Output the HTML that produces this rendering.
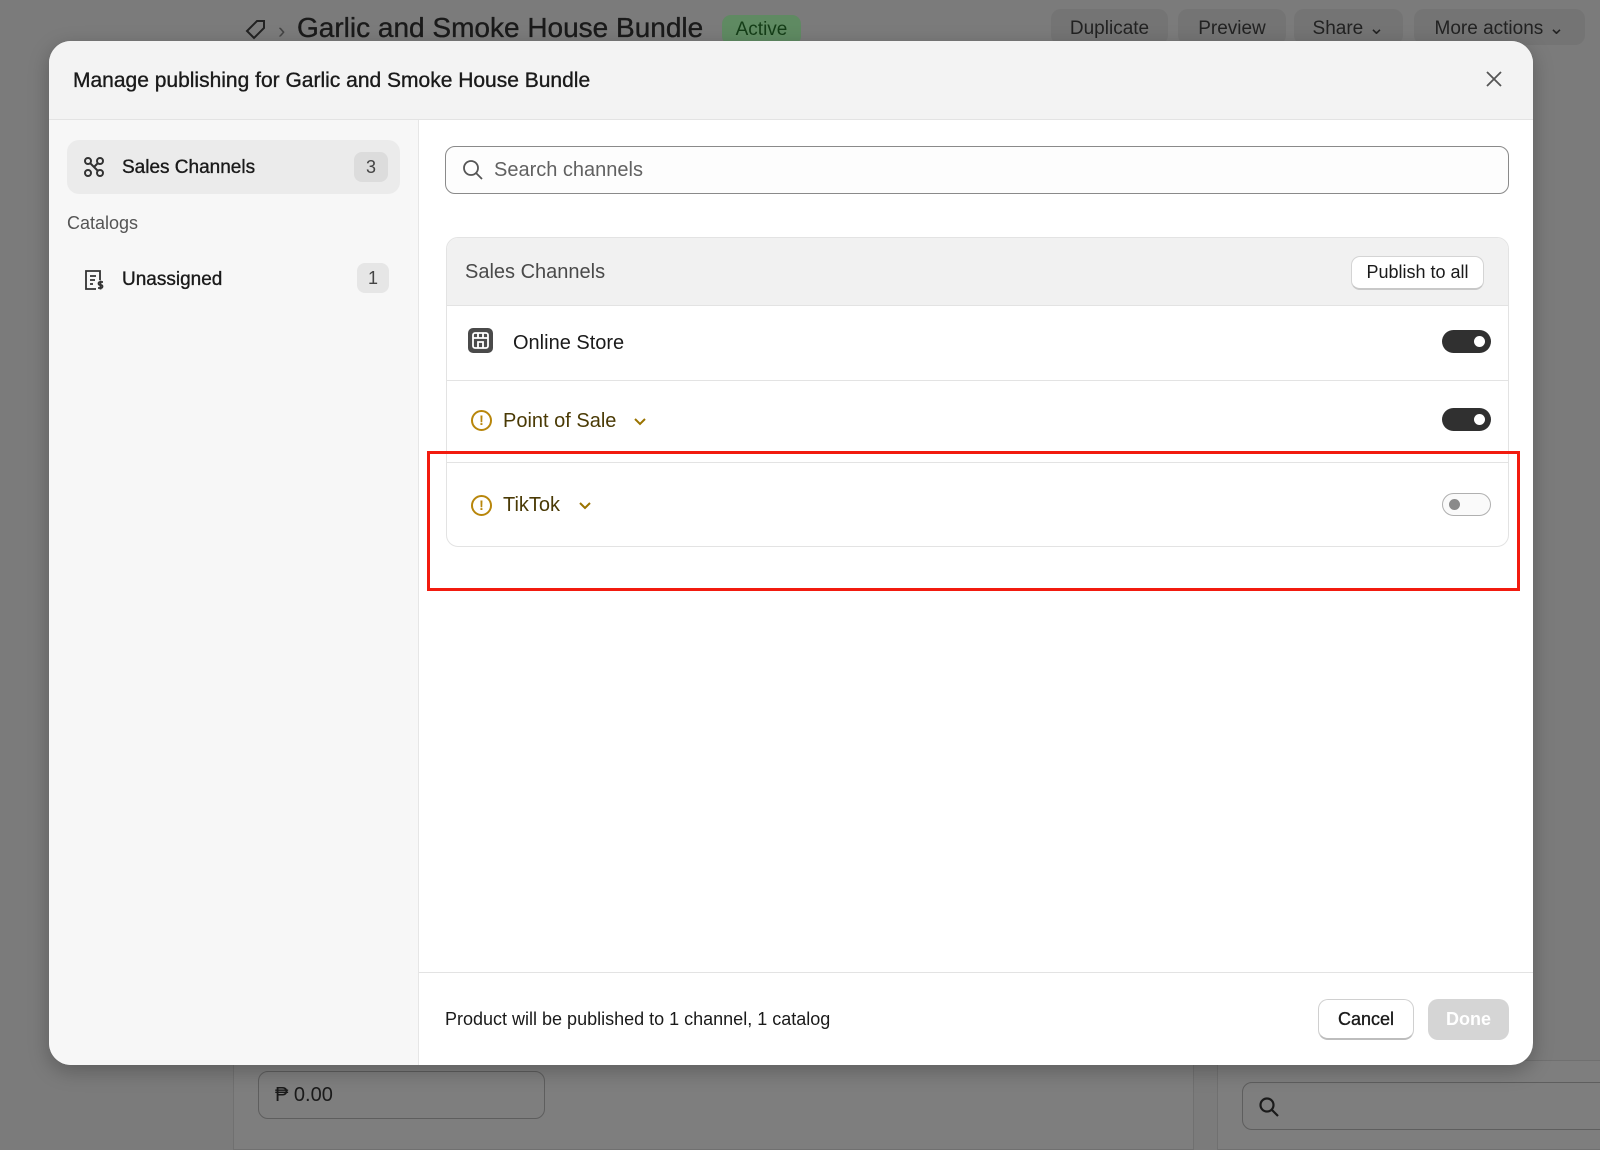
<!DOCTYPE html>
<html><head><meta charset="utf-8"><style>
*{box-sizing:border-box;margin:0;padding:0}
body{width:1600px;height:1150px;overflow:hidden;background:#7b7b7b;font-family:"Liberation Sans",Arial,sans-serif;position:relative}
.a{position:absolute}
.m{-webkit-text-stroke:0.35px currentColor}
.btnbg{position:absolute;top:9px;height:36px;background:#747474;border-radius:10px;color:#222;font-size:19px;line-height:40px;text-align:center}
.modal{position:absolute;left:49px;top:41px;width:1484px;height:1024px;background:#fff;border-radius:22px;overflow:hidden;box-shadow:0 6px 20px rgba(0,0,0,.25)}
.tog{position:absolute;left:1392px;width:49px;height:23px;border-radius:12px;background:#303030}
.tog i{position:absolute;right:6px;top:6px;width:11px;height:11px;border-radius:50%;background:#fff}
.warn{position:absolute;width:21px;height:21px;border:2px solid #b8860b;border-radius:50%;color:#b8860b;font-size:14px;font-weight:bold;text-align:center;line-height:17px}
</style></head><body>
<svg class="a" style="left:244px;top:18px" width="24" height="24" viewBox="0 0 24 24" fill="none" stroke="#222" stroke-width="2"><path d="M13 3h7v7l-10 10-7-7z"/></svg>
<div class="a" style="left:278px;top:18px;font-size:22px;color:#444">›</div>
<div class="a m" style="left:297px;top:12px;font-size:28px;color:#1a1a1a">Garlic and Smoke House Bundle</div>
<div class="a" style="left:722px;top:15px;width:79px;height:30px;background:#5f8a62;border-radius:9px;color:#143d17;font-size:19px;text-align:center;line-height:30px">Active</div>
<div class="btnbg" style="left:1051px;width:117px">Duplicate</div>
<div class="btnbg" style="left:1178px;width:108px">Preview</div>
<div class="btnbg" style="left:1294px;width:109px">Share ⌄</div>
<div class="btnbg" style="left:1414px;width:171px">More actions ⌄</div>
<div class="a" style="left:233px;top:1060px;width:961px;height:90px;background:#7e7e7e;border:1px solid #707070"></div>
<div class="a" style="left:1217px;top:1060px;width:400px;height:90px;background:#7e7e7e;border:1px solid #707070"></div>
<div class="a" style="left:258px;top:1071px;width:287px;height:48px;border:1px solid #5e5e5e;border-radius:10px;font-size:20px;color:#1a1a1a;padding:12px 16px">₱ 0.00</div>
<div class="a" style="left:1242px;top:1082px;width:400px;height:48px;border:1px solid #5e5e5e;border-radius:10px"></div>
<svg class="a" style="left:1258px;top:1096px" width="22" height="22" viewBox="0 0 22 22" fill="none" stroke="#1a1a1a" stroke-width="2.2"><circle cx="9" cy="9" r="6.5"/><path d="M14 14l6 6"/></svg>

<div class="modal">
 <div class="a" style="left:0;top:0;width:1484px;height:79px;background:#f3f3f3;border-bottom:1px solid #e3e3e3"></div>
 <div class="a m" style="left:24px;top:28px;font-size:21px;color:#1a1a1a">Manage publishing for Garlic and Smoke House Bundle</div>
 <svg class="a" style="left:1436px;top:29px" width="18" height="18" viewBox="0 0 18 18" stroke="#555" stroke-width="1.8"><path d="M2 2l14 14M16 2L2 16"/></svg>
 <div class="a" style="left:0;top:79px;width:370px;height:945px;background:#f7f7f7;border-right:1px solid #e6e6e6"></div>
 <div class="a" style="left:18px;top:99px;width:333px;height:54px;background:#ebebeb;border-radius:12px"></div>
 <svg class="a" style="left:34px;top:115px" width="22" height="22" viewBox="0 0 22 22" fill="none" stroke="#333" stroke-width="2"><circle cx="5" cy="5" r="3"/><circle cx="17" cy="5" r="3"/><circle cx="5" cy="17" r="3"/><circle cx="17" cy="17" r="3"/><path d="M7 7l8 8M15 7l-4 4"/></svg>
 <div class="a m" style="left:73px;top:116px;font-size:19px;color:#1a1a1a">Sales Channels</div>
 <div class="a" style="left:305px;top:111px;width:34px;height:30px;background:#dcdcdc;border-radius:8px;font-size:18px;color:#444;text-align:center;line-height:30px">3</div>
 <div class="a" style="left:18px;top:172px;font-size:18px;color:#555">Catalogs</div>
 <svg class="a" style="left:33px;top:227px" width="24" height="24" viewBox="0 0 24 24" fill="none" stroke="#333" stroke-width="1.8"><path d="M14 21H4V3h14v9"/><path d="M8 8h6M8 12h5M8 16h3"/><path d="M21 14h-3a1.5 1.5 0 000 3h1a1.5 1.5 0 010 3h-3M18.5 12.5v9"/></svg>
 <div class="a m" style="left:73px;top:228px;font-size:19px;color:#1a1a1a">Unassigned</div>
 <div class="a" style="left:308px;top:222px;width:32px;height:30px;background:#e6e6e6;border-radius:8px;font-size:18px;color:#444;text-align:center;line-height:30px">1</div>

 <div class="a" style="left:396px;top:105px;width:1064px;height:48px;border:1px solid #8a8a8a;border-radius:10px;background:#fdfdfd"></div>
 <svg class="a" style="left:413px;top:118px" width="22" height="22" viewBox="0 0 22 22" fill="none" stroke="#555" stroke-width="1.8"><circle cx="9" cy="9" r="7"/><path d="M14 14l6 6"/></svg>
 <div class="a" style="left:445px;top:118px;font-size:20px;color:#616161">Search channels</div>

 <div class="a" style="left:397px;top:196px;width:1063px;height:310px;border:1px solid #e3e3e3;border-radius:12px;overflow:hidden">
  <div class="a" style="left:0;top:0;width:100%;height:68px;background:#f1f1f1;border-bottom:1px solid #e3e3e3"></div>
  <div class="a" style="left:18px;top:23px;font-size:20px;color:#4a4a4a">Sales Channels</div>
  <div class="a" style="left:904px;top:18px;width:133px;height:34px;background:#fff;border:1px solid #d4d4d4;border-bottom:2px solid #c8c8c8;border-radius:9px;font-size:18px;color:#1a1a1a;text-align:center;line-height:31px">Publish to all</div>
  <div class="a" style="left:0;top:142px;width:100%;height:1px;background:#e3e3e3"></div>
  <div class="a" style="left:0;top:224px;width:100%;height:1px;background:#e3e3e3"></div>
  <svg class="a" style="left:21px;top:90px" width="25" height="25" viewBox="0 0 25 25"><rect x="0" y="0" width="25" height="25" rx="5" fill="#4a4a4a"/><rect x="5" y="5" width="15" height="15" rx="2" fill="none" stroke="#fff" stroke-width="1.8"/><path d="M5 10h15M10 5v5M15 5v5M10 20v-6h5v6" stroke="#fff" stroke-width="1.8" fill="none"/></svg>
  <div class="a" style="left:66px;top:94px;font-size:20px;color:#1a1a1a">Online Store</div>
  <div class="tog" style="top:92px;left:995px"><i></i></div>
  <div class="warn" style="left:24px;top:172px">!</div>
  <div class="a" style="left:56px;top:172px;font-size:20px;color:#4a3a05">Point of Sale</div>
  <svg class="a" style="left:186px;top:179px" width="14" height="10" viewBox="0 0 14 10" fill="none" stroke="#9a7300" stroke-width="2"><path d="M2 2l5 5 5-5"/></svg>
  <div class="tog" style="top:170px;left:995px"><i></i></div>
  <div class="warn" style="left:24px;top:257px">!</div>
  <div class="a" style="left:56px;top:256px;font-size:20px;color:#4a3a05">TikTok</div>
  <svg class="a" style="left:131px;top:263px" width="14" height="10" viewBox="0 0 14 10" fill="none" stroke="#9a7300" stroke-width="2"><path d="M2 2l5 5 5-5"/></svg>
  <div class="a" style="left:995px;top:255px;width:49px;height:23px;border-radius:12px;border:1px solid #b0b0b0;background:#fafafa"><i style="position:absolute;left:6px;top:5px;width:11px;height:11px;border-radius:50%;background:#8a8a8a"></i></div>
 </div>

 <div class="a" style="left:370px;top:931px;width:1114px;height:1px;background:#e3e3e3"></div>
 <div class="a" style="left:396px;top:968px;font-size:18px;color:#1a1a1a">Product will be published to 1 channel, 1 catalog</div>
 <div class="a m" style="left:1269px;top:958px;width:96px;height:41px;border:1px solid #d0d0d0;border-bottom:2px solid #bdbdbd;border-radius:10px;font-size:18px;color:#1a1a1a;text-align:center;line-height:38px">Cancel</div>
 <div class="a" style="left:1379px;top:958px;width:81px;height:41px;background:#d5d5d5;border-radius:10px;font-size:18px;color:#fff;text-align:center;line-height:41px;font-weight:bold">Done</div>
</div>
<div class="a" style="left:427px;top:451px;width:1093px;height:140px;border:3px solid #f21b0f"></div>
</body></html>
